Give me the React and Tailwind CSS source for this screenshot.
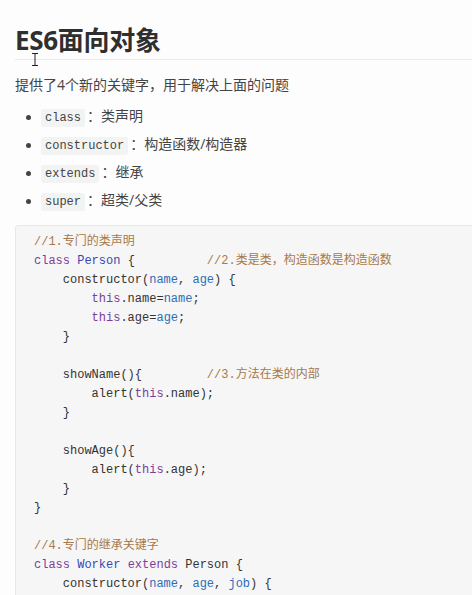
import React from "react";

const K = ({ children }) => <span className="text-[#7a3f9a]">{children}</span>;
const D = ({ children }) => <span className="text-[#3b47b0]">{children}</span>;
const V = ({ children }) => <span className="text-[#2f6db5]">{children}</span>;
const C = ({ children }) => <span className="text-[#a8794a]">{children}</span>;

const lines = [
  <C>//1.专门的类声明</C>,
  <>
    <K>class</K> <D>Person</D> {"{"}          <C>//2.类是类，构造函数是构造函数</C>
  </>,
  <>
    {"    constructor("}
    <V>name</V>, <V>age</V>) {"{"}
  </>,
  <>
    {"        "}
    <K>this</K>.name=<V>name</V>;
  </>,
  <>
    {"        "}
    <K>this</K>.age=<V>age</V>;
  </>,
  <>{"    }"}</>,
  <> </>,
  <>
    {"    showName(){         "}
    <C>//3.方法在类的内部</C>
  </>,
  <>
    {"        alert("}
    <K>this</K>.name);
  </>,
  <>{"    }"}</>,
  <> </>,
  <>{"    showAge(){"}</>,
  <>
    {"        alert("}
    <K>this</K>.age);
  </>,
  <>{"    }"}</>,
  <>{"}"}</>,
  <> </>,
  <C>//4.专门的继承关键字</C>,
  <>
    <K>class</K> <D>Worker</D> <K>extends</K> Person {"{"}
  </>,
  <>
    {"    constructor("}
    <V>name</V>, <V>age</V>, <V>job</V>) {"{"}
  </>,
];

const items = [
  ["class", "类声明"],
  ["constructor", "构造函数/构造器"],
  ["extends", "继承"],
  ["super", "超类/父类"],
];

const mono = "font-['Liberation_Mono','Noto_Sans_CJK_SC',monospace]";

export default function App() {
  return (
    <div className="relative h-[595px] w-[472px] overflow-hidden bg-[#fdfdfd] text-[#333] font-['Open_Sans','Noto_Sans_CJK_SC',sans-serif]">
      <div className="pl-[15px]">
        <h1 className="pt-[24px] pb-[3px] text-[26px] leading-[32px] font-bold tracking-[-0.3px] text-[#2f2f2f] border-b border-[#eaeaea]">
          ES6面向对象
        </h1>
        <p className="mt-[14px] text-[14px] leading-[22px] text-[#444]">
          提供了4个新的关键字，用于解决上面的问题
        </p>
        <ul className="mt-[7px]">
          {items.map(([code, text]) => (
            <li key={code} className="flex items-center h-[28px] text-[14px] text-[#444]">
              <span className="ml-[11px] mr-[10px] w-[5px] h-[5px] rounded-full bg-[#444]" />
              <span className="leading-[18px]">
                <code
                  className={`${mono} text-[12px] px-[4px] py-[2px] bg-[#f2f3f3] rounded-[3px] align-baseline`}
                >
                  {code}
                </code>
                <span className="ml-[2px]">：</span>
                {text}
              </span>
            </li>
          ))}
        </ul>
        <pre
          className={`${mono} mt-[10px] w-[520px] pt-[7px] pb-[20px] pl-[18px] text-[12px] leading-[19px] text-[#333] bg-[#f6f6f6] border border-[#e7e7e7] rounded-[3px]`}
        >
          {lines.map((l, i) => (
            <div key={i} className="h-[19px] whitespace-pre">
              {l}
            </div>
          ))}
        </pre>
      </div>
      <svg
        className="absolute left-[31px] top-[53px]"
        width="8"
        height="13"
        viewBox="0 0 8 13"
      >
        <path d="M1 0.5h6M1 12.5h6M4 0.5v12" stroke="#222" strokeWidth="1" fill="none" />
      </svg>
    </div>
  );
}
